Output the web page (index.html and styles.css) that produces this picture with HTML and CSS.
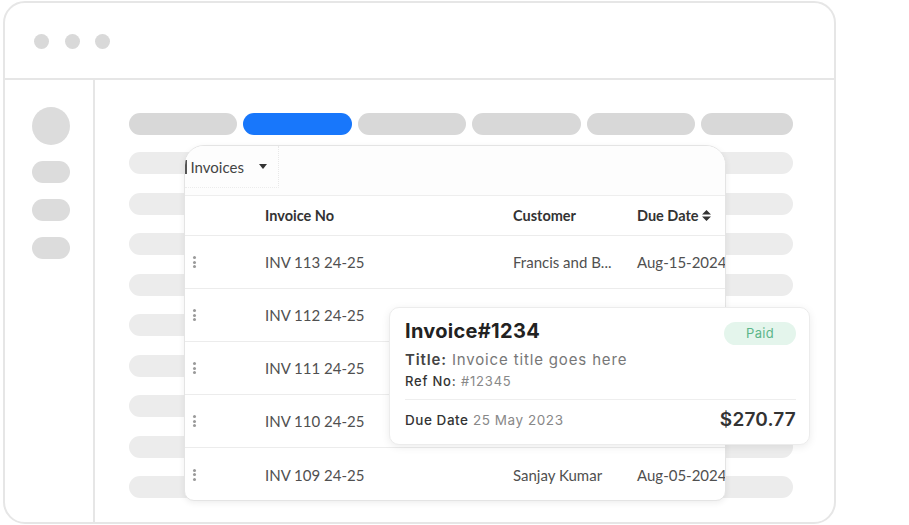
FILE: index.html
```html
<!DOCTYPE html>
<html>

<head>
    <meta charset='utf-8'>
    <title>Invoices</title>
    <link rel="stylesheet" href="styles.css">
</head>

<body>
    <div class="window">
        <div class="titlebar">
            <span class="dot"></span>
            <span class="dot"></span>
            <span class="dot"></span>
        </div>
        <div class="main">
            <div class="sidebar">
                <div class="avatar"></div>
                <div class="side-pill"></div>
                <div class="side-pill"></div>
                <div class="side-pill"></div>
            </div>
            <div class="content">
                <div class="tabs">
                    <div class="tab"></div>
                    <div class="tab active"></div>
                    <div class="tab"></div>
                    <div class="tab"></div>
                    <div class="tab"></div>
                    <div class="tab last"></div>
                </div>
                <div class="skeleton">
                    <div class="sk-row"></div>
                    <div class="sk-row"></div>
                    <div class="sk-row"></div>
                    <div class="sk-row"></div>
                    <div class="sk-row"></div>
                    <div class="sk-row"></div>
                    <div class="sk-row"></div>
                    <div class="sk-row"></div>
                    <div class="sk-row"></div>
                </div>
            </div>
        </div>

        <!-- table card sits over the skeleton -->
        <div class="table-card">
            <div class="toolbar">
                <div class="view-select">
                    <span class="cut"></span>Invoices
                    <svg class="caret" width="8" height="5" viewBox="0 0 8 5"><path d="M0 0h8L4 5z" fill="#333"/></svg>
                </div>
            </div>
            <div class="trow head">
                <div></div>
                <div>Invoice No</div>
                <div>Customer</div>
                <div class="sort">Due Date
                    <svg width="9" height="11" viewBox="0 0 9 11"><path d="M4.5 0L9 4.5H0z M0 6.5h9L4.5 11z" fill="#333"/></svg>
                </div>
            </div>
            <div class="trow">
                <div class="kebab"><i></i><i></i><i></i></div>
                <div>INV 113 24-25</div>
                <div>Francis and B...</div>
                <div>Aug-15-2024</div>
            </div>
            <div class="trow">
                <div class="kebab"><i></i><i></i><i></i></div>
                <div>INV 112 24-25</div>
                <div></div>
                <div></div>
            </div>
            <div class="trow">
                <div class="kebab"><i></i><i></i><i></i></div>
                <div>INV 111 24-25</div>
                <div></div>
                <div></div>
            </div>
            <div class="trow">
                <div class="kebab"><i></i><i></i><i></i></div>
                <div>INV 110 24-25</div>
                <div></div>
                <div></div>
            </div>
            <div class="trow">
                <div class="kebab"><i></i><i></i><i></i></div>
                <div>INV 109 24-25</div>
                <div>Sanjay Kumar</div>
                <div>Aug-05-2024</div>
            </div>
        </div>

        <!-- invoice preview popup -->
        <div class="popup">
            <div class="pop-top">
                <div class="pop-title">Invoice#1234</div>
                <span class="badge">Paid</span>
            </div>
            <div class="pop-line"><b>Title:</b> Invoice title goes here</div>
            <div class="pop-ref"><b>Ref No:</b> #12345</div>
            <div class="pop-foot">
                <div class="pop-due"><b>Due Date</b> 25 May 2023</div>
                <div class="amount">$270.77</div>
            </div>
        </div>
    </div>
</body>
</html>
```

FILE: styles.css
```css
body {
    margin: 0;
    background: #fff;
    font-family: Lato, "Liberation Sans", sans-serif;
}

.window {
    position: relative;
    margin: 1px 0 0 3px;
    width: 833px;
    height: 523px;
    box-sizing: border-box;
    border: 2px solid #e6e6e6;
    border-radius: 22px;
    overflow: hidden;
}

.titlebar {
    display: flex;
    gap: 15.5px;
    height: 77px;
    box-sizing: border-box;
    padding: 31px 0 0 29px;
    border-bottom: 2px solid #e6e6e6;
}

.dot {
    width: 15px;
    height: 15px;
    border-radius: 50%;
    background: #d9d9d9;
}

.main {
    display: flex;
    height: 442px;
}

.sidebar {
    width: 90px;
    box-sizing: border-box;
    border-right: 2px solid #e6e6e6;
    padding: 27px 0 0 27px;
    display: flex;
    flex-direction: column;
    gap: 16px;
}

.avatar {
    width: 38px;
    height: 38px;
    border-radius: 50%;
    background: #dcdcdc;
}

.side-pill {
    width: 38px;
    height: 22px;
    border-radius: 11px;
    background: #dcdcdc;
}

.content {
    flex: 1;
    padding: 33px 41px 0 34px;
}

.tabs {
    display: flex;
    gap: 6px;
}

.tab {
    flex: 1;
    height: 22px;
    border-radius: 11px;
    background: #d8d8d8;
}

.tab.active {
    background: #1877fb;
}

.tab.last {
    flex: 0 0 92px;
}

.skeleton {
    margin-top: 17px;
    display: flex;
    flex-direction: column;
    gap: 18.5px;
}

.sk-row {
    height: 22px;
    border-radius: 11px;
    background: #ececec;
}

/* table card */
.table-card {
    position: absolute;
    left: 179px;
    top: 142px;
    width: 542px;
    height: 356px;
    box-sizing: border-box;
    background: #fff;
    border: 1.5px solid #e4e4e4;
    border-radius: 20px 20px 10px 10px;
    box-shadow: 0 2px 6px rgba(0, 0, 0, .07);
    overflow: hidden;
    color: #505050;
    font-size: 15px;
    white-space: nowrap;
}

.toolbar {
    height: 50px;
    box-sizing: border-box;
    border-bottom: 1px solid #eeeeee;
    background: #fdfdfd;
}

.view-select {
    display: flex;
    align-items: center;
    width: 94px;
    height: 42px;
    box-sizing: border-box;
    border-right: 1px dotted #e8e8e8;
    border-bottom: 1px dotted #ececec;
    color: #444;
}

.cut {
    width: 1.5px;
    height: 14px;
    background: #555;
    margin: 0 4px 0 0;
}

.caret {
    margin-left: 15px;
}

.trow {
    display: grid;
    grid-template-columns: 80px 248px 124px 1fr;
    align-items: center;
    height: 53px;
    box-sizing: border-box;
    border-bottom: 1px solid #ececec;
}

.trow.head {
    height: 40px;
    color: #333;
    font-weight: 700;
    font-size: 14.5px;
}

.trow:last-child {
    border-bottom: 0;
}

.sort {
    display: flex;
    align-items: center;
    gap: 3px;
}

.kebab {
    display: flex;
    flex-direction: column;
    gap: 1.5px;
    padding-left: 8px;
}

.kebab i {
    width: 3px;
    height: 3px;
    border-radius: 50%;
    background: #9a9a9a;
}

/* popup */
.popup {
    position: absolute;
    left: 384px;
    top: 304px;
    width: 421px;
    height: 138px;
    box-sizing: border-box;
    padding: 10px 13px 0 15px;
    background: #fff;
    border: 1px solid #ececec;
    border-radius: 10px;
    box-shadow: 0 2px 8px rgba(0, 0, 0, .08);
    font-family: Inter, "Liberation Sans", sans-serif;
    color: #888;
}

.pop-top {
    display: flex;
    justify-content: space-between;
    align-items: flex-start;
}

.pop-title {
    font-size: 20px;
    font-weight: 700;
    letter-spacing: 0.3px;
    color: #222;
    line-height: 26px;
}

.badge {
    margin-top: 4px;
    padding: 3px 22px;
    border-radius: 12px;
    background: #e4f5ec;
    color: #5cb58a;
    font-size: 13px;
    letter-spacing: 0.3px;
    line-height: 17px;
}

.pop-line {
    font-size: 15px;
    line-height: 20px;
    margin-top: 5px;
    letter-spacing: 0.85px;
    color: #777;
}

.pop-line b {
    color: #444;
    font-weight: 600;
}

.pop-ref {
    font-size: 13px;
    line-height: 20px;
    margin-top: 1px;
    letter-spacing: 0.8px;
}

.pop-ref b,
.pop-due b {
    color: #333;
    font-weight: 500;
}

.pop-foot {
    display: flex;
    justify-content: space-between;
    align-items: center;
    margin-top: 8px;
    padding-top: 8px;
    border-top: 1px solid #eeeeee;
}

.pop-due {
    font-size: 13.5px;
    letter-spacing: 0.55px;
}

.amount {
    font-size: 19px;
    font-weight: 600;
    letter-spacing: 0.2px;
    color: #333;
}
```
